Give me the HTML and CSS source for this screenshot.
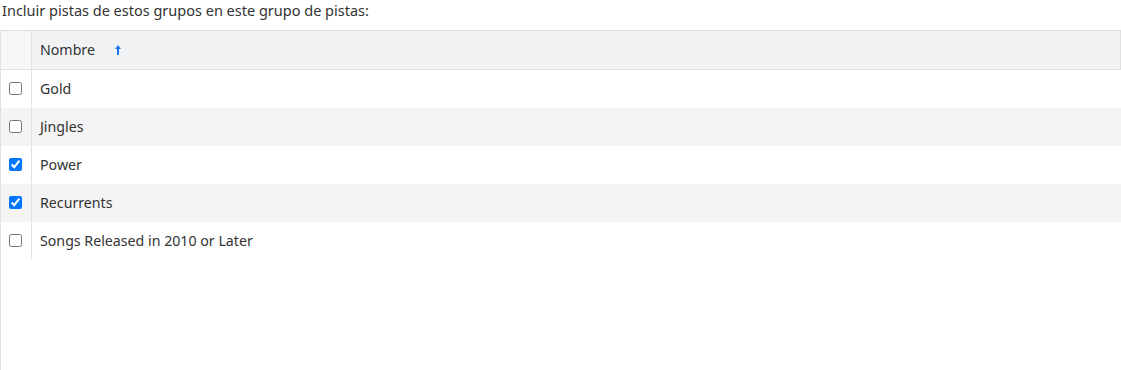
FILE: index.html
```html
<!DOCTYPE html>
<html lang="es">
<head>
  <meta charset="UTF-8" />
  <title>Grupos de pistas</title>
  <link rel="stylesheet" href="styles.css">
</head>
<body>
  <p class="intro">Incluir pistas de estos grupos en este grupo de pistas:</p>

  <div class="grid">
    <div class="grid-head">
      <div class="cell check-col"></div>
      <div class="cell name-col">
        Nombre
        <svg class="sort" width="8" height="11" viewBox="0 0 8 11">
          <path d="M4 1 L7 5 H5 V11 H3 V5 H1 Z" fill="#1e78f0"/>
        </svg>
      </div>
    </div>

    <div class="row">
      <div class="cell check-col"><input type="checkbox"></div>
      <div class="cell name-col">Gold</div>
    </div>
    <div class="row alt">
      <div class="cell check-col"><input type="checkbox"></div>
      <div class="cell name-col">Jingles</div>
    </div>
    <div class="row">
      <div class="cell check-col"><input type="checkbox" checked></div>
      <div class="cell name-col">Power</div>
    </div>
    <div class="row alt">
      <div class="cell check-col"><input type="checkbox" checked></div>
      <div class="cell name-col">Recurrents</div>
    </div>
    <div class="row">
      <div class="cell check-col"><input type="checkbox"></div>
      <div class="cell name-col">Songs Released in 2010 or Later</div>
    </div>
  </div>
</body>
</html>
```

FILE: styles.css
```css
body {
  margin: 0;
  font-family: "Noto Sans", Arial, sans-serif;
  font-size: 14.2px;
  color: #333;
  background: #fff;
}
.intro {
  margin: 0;
  padding: 1px 0 0 2px;
  height: 30px;
  line-height: 19px;
  font-size: 14.5px;
  box-sizing: border-box;
}
.grid {
  border-left: 1px solid #e0e0e0;
  height: 340px;
  box-sizing: border-box;
}
.grid-head {
  display: flex;
  height: 40px;
  box-sizing: border-box;
  border: 1px solid #e0e0e0;
  border-left: none;
  background: #f1f2f4;
}
.grid-head .check-col {
  background: #f7f7f8;
}
.grid-head .name-col {
  padding-bottom: 1px;
}
.row {
  display: flex;
  height: 38px;
  padding-bottom: 1px;
  box-sizing: border-box;
}
.row.alt {
  background: #f4f4f4;
}
.cell {
  display: flex;
  align-items: center;
}
.check-col {
  width: 30px;
  flex: none;
  justify-content: center;
  border-right: 1px solid #e0e0e0;
}
.check-col input {
  margin: 0 2px 0 0;
  width: 13px;
  height: 13px;
}
.name-col {
  flex: 1;
  padding-left: 8px;
}
.sort {
  margin-left: 19px;
}
```
